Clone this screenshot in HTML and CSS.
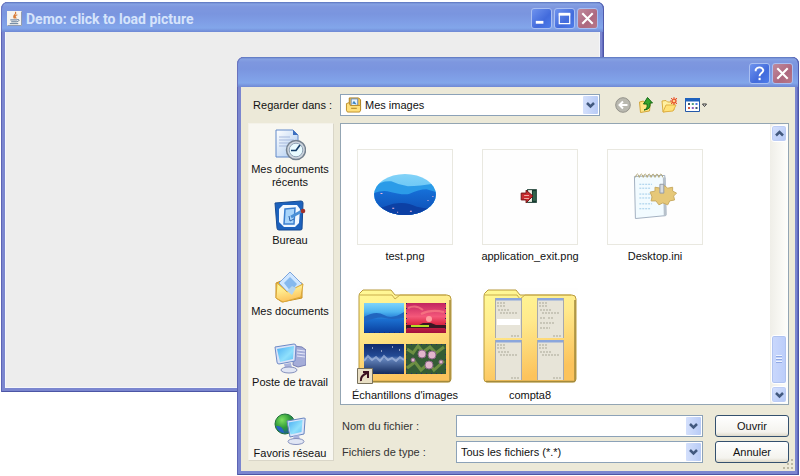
FILE: index.html
```html
<!DOCTYPE html>
<html lang="fr">
<head>
<meta charset="utf-8">
<title>Demo: click to load picture</title>
<link rel="stylesheet" href="styles.css">
</head>
<body>
<svg class="defs" aria-hidden="true">
  <defs>
    <linearGradient id="folder" x1="0" y1="0" x2=".3" y2="1"><stop offset="0" stop-color="#fffa96"/><stop offset=".45" stop-color="#ffe98c"/><stop offset="1" stop-color="#fcc35c"/></linearGradient>
    <linearGradient id="screen" x1="0" y1="0" x2="1" y2="1"><stop offset="0" stop-color="#4aaef2"/><stop offset=".6" stop-color="#8fe0fc"/><stop offset="1" stop-color="#5cc0f4"/></linearGradient>
    <linearGradient id="paper" x1="0" y1="0" x2="1" y2="1"><stop offset="0" stop-color="#fff"/><stop offset="1" stop-color="#a9c8ef"/></linearGradient>
    <linearGradient id="sky" x1="0" y1="0" x2="0" y2="1"><stop offset="0" stop-color="#7fd4fa"/><stop offset=".3" stop-color="#4db4f0"/><stop offset=".55" stop-color="#1b6fd0"/><stop offset="1" stop-color="#0a3f9e"/></linearGradient>
    <linearGradient id="sunset" x1="0" y1="0" x2="0" y2="1"><stop offset="0" stop-color="#c22460"/><stop offset=".45" stop-color="#f4587a"/><stop offset=".68" stop-color="#e02c48"/><stop offset="1" stop-color="#a0103c"/></linearGradient>
    <linearGradient id="night" x1="0" y1="0" x2="0" y2="1"><stop offset="0" stop-color="#102a6c"/><stop offset=".4" stop-color="#234a94"/><stop offset=".5" stop-color="#6484bc"/><stop offset="1" stop-color="#122a5c"/></linearGradient>
    <radialGradient id="globe" cx=".35" cy=".3" r=".8"><stop offset="0" stop-color="#7fe060"/><stop offset=".5" stop-color="#2f9a38"/><stop offset="1" stop-color="#174ea8"/></radialGradient>
    <symbol id="folder-big" viewBox="0 0 96 96">
      <path d="M2 91V8q0-3 2-4l2-2h28l4 5h52q4 0 4 4v80q0 3-3 3H5q-3 0-3-3z" fill="url(#folder)" stroke="#b99a3c"/>
      <path d="M3 7h32l3 4 5-4h46" fill="none" stroke="#c9ad4d"/>
      <path d="M93 12v81M4 93.500h89" stroke="#a38a3c" stroke-width="1.500"/>
    </symbol>
    <symbol id="sheet" viewBox="0 0 27 40">
      <path d="M0 0h27v40H0z" fill="#e7e4d8"/><path d="M0 0h27v2.500H0z" fill="#8ba6dc"/>
      <path d="M26.500 0v40M.5 0v40" stroke="#a7a9ae"/><path d="M2 5h9M2 8h8M3 12h12M5 15h18M16 38h9" stroke="#a9a797" stroke-dasharray="2 1"/>
    </symbol>
  </defs>
</svg>

<main class="desktop">
  <section class="window demo" aria-label="Demo">
    <header class="titlebar">
      <svg class="java" viewBox="0 0 16 16" aria-hidden="true"><path d="M0 0h16v16H0z" fill="#f5f4f0"/><path d="M.5 15.500h15V.5" fill="none" stroke="#8793a8"/><path d="M9 1c2 3-4 3-1 7M11 4c-3 1-3 2-1 4" fill="none" stroke="#d77a35" stroke-width="1.300"/><path d="M3.500 9.500h7.500M4.500 11.500h6M3 13.500h9M11 9c3 0 2 2-.5 2.500" fill="none" stroke="#557292"/></svg>
      <h1>Demo: click to load picture</h1>
      <div class="captions">
        <button class="cap" aria-label="Minimize"><svg viewBox="0 0 20 20"><path d="M4 14h8" stroke="#fff" stroke-width="3"/></svg></button>
        <button class="cap" aria-label="Maximize"><svg viewBox="0 0 20 20"><path d="M4.500 5h11v10.500h-11z" fill="none" stroke="#fff" stroke-width="1.300"/><path d="M4 5.500h12" stroke="#fff" stroke-width="3"/></svg></button>
        <button class="cap close" aria-label="Close"><svg viewBox="0 0 20 20"><path d="M4.500 4.500l11 11M15.500 4.500l-11 11" stroke="#fff" stroke-width="2.200"/></svg></button>
      </div>
    </header>
    <div class="canvas"></div>
  </section>

  <section class="window dialog" role="dialog" aria-label="Mes images">
    <header class="titlebar">
      <div class="captions">
        <button class="cap" aria-label="Aide"><svg viewBox="0 0 20 20"><path d="M6 7.500V6Q7 3.500 10 3.500t4 3q0 1.500-2 3T10 13" fill="none" stroke="#fff" stroke-width="2"/><path d="M9 14.500h2.200v2.500H9z" fill="#fff"/></svg></button>
        <button class="cap close" aria-label="Fermer"><svg viewBox="0 0 20 20"><path d="M4.500 4.500l11 11M15.500 4.500l-11 11" stroke="#fff" stroke-width="2.200"/></svg></button>
      </div>
    </header>
    <form class="content">
      <div class="lookin">
        <label for="dir">Regarder dans :</label>
        <div class="combo with-icon">
          <svg class="dir-icon" viewBox="0 0 17 17" aria-hidden="true"><path d="M4 1h10l2 2v11l-2 1H4z" fill="#f3c54e" stroke="#a97c1c"/><path d="M6 2h7v7H6z" fill="#e7f3fd" stroke="#6585b0"/><path d="M7 7l2-3 3 4z" fill="#3e87c4"/><path d="M1 7l3-1 1 3h11v5l-1 2H2l-1-2z" fill="#ffe07c" stroke="#bb8c26"/><path d="M6 12h6" stroke="#a97c1c"/></svg>
          <select id="dir"><option>Mes images</option></select>
          <svg class="arrow" viewBox="0 0 15 17" aria-hidden="true"><path d="M4 6.500l3.500 3.500L11 6.500" /></svg>
        </div>
        <div class="tools">
          <button type="button" aria-label="Retour"><svg viewBox="0 0 16 16"><circle cx="8" cy="8" r="7.300" fill="#b9b8af" stroke="#94938b"/><path d="M12.500 8H5M8 4.500L4.500 8 8 11.500" fill="none" stroke="#fff" stroke-width="2"/></svg></button>
          <button type="button" aria-label="Dossier parent"><svg viewBox="0 0 16 16"><path d="M1.500 5l4-1 1 1.500 6-1.500-1 10-9 1.500z" fill="#ffe583" stroke="#d2a63a"/><path d="M6 13q4-1 3-6H5.500L9.500.5l5 5.500H12q1 6.500-6 7z" fill="#35a42c" stroke="#146b16"/></svg></button>
          <button type="button" aria-label="Nouveau dossier"><svg viewBox="0 0 16 16"><path d="M1 4l4-.5L6.500 5H13v8l-11 2z" fill="#fff0a0" stroke="#d9ad40"/><path d="M2 15l3-7h10l-3 6z" fill="#ffe277" stroke="#e0b145"/><circle cx="13" cy="4" r="2" fill="#ffd08a" stroke="#e8542c" stroke-width="1.300"/><path d="M13 0v1M13 7v1M9 4h1M10 1l1 1M15 6l1 1M16 1l-1 1M11 6l-1 1" stroke="#e8542c"/></svg></button>
          <button type="button" class="views" aria-label="Affichage"><svg viewBox="0 0 24 16"><path d="M1.500 1.500h14v13h-14z" fill="#fff" stroke="#2458a8"/><path d="M1 1h15v3.500H1z" fill="#1f62bd"/><path d="M4 6h2v2H4zM11.500 10h2v2h-2z" fill="#405a70"/><path d="M7.800 6h2v2h-2z" fill="#50a080"/><path d="M11.500 6h2v2h-2z" fill="#4c7ae0"/><path d="M4 10h2v2H4z" fill="#d05a40"/><path d="M7.800 10h2v2h-2z" fill="#905ac0"/><path d="M18.500 7h4l-2 2.500z" fill="#fff" stroke="#333"/></svg></button>
        </div>
      </div>

      <div class="middle">
        <nav class="places" aria-label="Emplacements">
          <button type="button"><svg viewBox="0 0 32 32"><path d="M2 1h17l5 5v22H2z" fill="url(#paper)" stroke="#6188c8"/><path d="M19 1v5h5z" fill="#3c6fc0"/><path d="M5 8h11M5 11h15M5 14h10M5 17h9" stroke="#a7b9dd"/><circle cx="22" cy="21" r="9.500" fill="#cfd6df" stroke="#74818f" stroke-width="1.500"/><circle cx="22" cy="21" r="6.800" fill="#e9fbff" stroke="#8fa2b5"/><path d="M26 16l-4 5.500h-5" fill="none" stroke="#153d69" stroke-width="1.700"/></svg>Mes documents récents</button>
          <button type="button"><svg viewBox="0 0 32 32"><path d="M1 3l26-2q2 0 2 2l-1 26q0 1-2 1L5 30q-2 0-2-2z" fill="#1d62bd" stroke="#164b94"/><path d="M9 5h14l3 4-1 14-4 4H10l-5-5V9z" fill="#f2f8ff"/><path d="M11 9l10-1-1 16H10z" fill="#a8d4fb" stroke="#3b7fcf" stroke-width="1.500"/><path d="M15 16l1 5 4-2" fill="none" stroke="#2a62aa"/><path d="M17 17l11-6" stroke="#4a8fd6" stroke-width="3"/><circle cx="29" cy="11" r="2.300" fill="#a1302a"/></svg>Bureau</button>
          <button type="button"><svg viewBox="0 0 32 32"><path d="M2 12l5-2 6 4 15-2v15l-20 4-6-4z" fill="#f0b93a" stroke="#c88f22"/><path d="M5 12L16 1l12 12-11 12z" fill="#cfe6ff" stroke="#7ba4dc"/><path d="M10 12l6-6 7 7-6 8z" fill="#86b9ee"/><path d="M3 12l7 6 3 3 16-8-2 13-18 5-7-4z" fill="url(#folder)" stroke="#dba93b"/><path d="M13 20l5-5 4 2-4 7z" fill="#b6d5ec"/></svg>Mes documents</button>
          <button type="button"><svg viewBox="0 0 32 32"><path d="M20 4l8 1 4 3v15l-8 2-5-2z" fill="#a4acd8" stroke="#7880b4"/><path d="M23 8l8 1M23 11l8 1M23 14l8 1" stroke="#e6e8fa"/><path d="M1 5l19-3q2 0 2 2l-1 15-16 3q-2 0-2-2z" fill="#dbe3f7" stroke="#6e8ac7"/><path d="M3 7l17-3-1 13-13 3z" fill="url(#screen)"/><path d="M10 22l7-1 1 5h-7z" fill="#a9b3dc"/><ellipse cx="15" cy="28" rx="8" ry="3" fill="#e1e6f4" stroke="#8490bd"/></svg>Poste de travail</button>
          <button type="button"><svg viewBox="0 0 32 32"><circle cx="11" cy="11" r="10" fill="url(#globe)" stroke="#20703c"/><path d="M2 13q7-1 8 7-6-1-8-7z" fill="#2762c4"/><path d="M13 8l17-3q2 0 1 2l-1 14-14 3z" fill="#dbe5fa" stroke="#6985c0"/><path d="M14.500 9.500l14-2.500-1 12-11 2.500z" fill="url(#screen)"/><path d="M19 23l6-1 1 5h-6z" fill="#a9b3dc"/><ellipse cx="22" cy="28.500" rx="8" ry="3" fill="#e1e6f4" stroke="#8490bd"/></svg>Favoris réseau</button>
        </nav>

        <div class="files">
          <ul class="tiles">
            <li><div class="thumb"><svg viewBox="0 0 96 96"><clipPath id="oval"><ellipse cx="48" cy="45.500" rx="31.500" ry="21"/></clipPath><linearGradient id="haze" x1="0" y1="0" x2="0" y2="1"><stop offset="0" stop-color="#86d4f8"/><stop offset="1" stop-color="#3fb2f2"/></linearGradient><linearGradient id="ridge" x1="0" y1="0" x2="0" y2="1"><stop offset="0" stop-color="#1670d8"/><stop offset="1" stop-color="#0d49b0"/></linearGradient><g clip-path="url(#oval)"><path d="M16 22h64v46H16z" fill="url(#haze)"/><path d="M16 38q8-7 18-6 8 4 17 5 12 0 29-3v34H16z" fill="#2b9be8"/><path d="M16 44q8-3 14-2 14 4 22 3 10-5 18-5l10 3v26H16z" fill="url(#ridge)"/><path d="M16 60q10-1 20-5 13-3 24 3 12 3 20 1v12H16z" fill="#0c40a4"/></g><path d="M23 44h2v1h-2zM35 59h2v1h-2zM40 63h1v1h-1zM53 62h2v1h-2zM71 51h1v1h-1zM76 47h1v1h-1z" fill="#f4b6d8"/></svg></div><span>test.png</span></li>
            <li><div class="thumb"><svg viewBox="0 0 96 96"><path d="M45 40h10v14H45z" fill="#173b30"/><path d="M46 41h4v12h-4z" fill="#efefe5"/><path d="M51 42h3v10h-3z" fill="#32614a"/><path d="M39 44h5v-3l7 6-7 7v-3h-5z" fill="#c82c30" stroke="#741316"/><path d="M42 46h5v1h-5zM42 49h5v1h-5z" fill="#f0a6a0"/></svg></div><span>application_exit.png</span></li>
            <li><div class="thumb"><svg viewBox="0 0 96 96"><path d="M27 27l31-1 1 41-31 3z" fill="#f2fbff" stroke="#a2afbf"/><path d="M56 28h3l1 38-3 2z" fill="#b7c1cb"/><path d="M28 28q2-7 4 0 2-7 4 0 2-7 4 0 2-7 4 0 2-7 4 0 2-7 4 0 2-7 4 0" fill="none" stroke="#b3a878"/><path d="M32 35h13M32 39h12M32 45h14M32 49h14M32 55h13M32 60h12" stroke="#9fcbe8" stroke-dasharray="2 1"/><path d="M43 43l5-1 0-4 6 1 3-3 4 3 5-1 0 4 4 2-3 3 1 4-5 1-2 4-5-2-4 2-3-4-5 0 1-4z" fill="#e6c878" stroke="#c9ab62"/><path d="M53 35h4v9h-4z" fill="#d7dbe0" stroke="#929aa4"/></svg></div><span>Desktop.ini</span></li>
            <li><div class="thumb folder"><svg viewBox="0 0 96 96"><use href="#folder-big"/><path d="M7 15h40v30H7z" fill="url(#sky)"/><path d="M7 29q12-7 20-2t20-3v6q-12 2-19 0t-21 4z" fill="#2166c0"/><path d="M49 15h40v30H49z" fill="url(#sunset)"/><path d="M51 20q8-4 15 2M64 26q10-5 23-2" fill="none" stroke="#ff8a8a" stroke-width="2" opacity=".6"/><circle cx="72" cy="31" r="3" fill="#ff9da0"/><path d="M49 37h13l4-2h8l5 2h10v3H49z" fill="#391824"/><path d="M54 38h18" stroke="#b6dc24" stroke-width="2"/><path d="M7 56h40v30H7z" fill="url(#night)"/><path d="M7 73l4-5 4 4 4-3 4 4 4-5 4 4 4-2 4 3 4-4 4 3" fill="none" stroke="#a8bce0" stroke-width="2" opacity=".7"/><path d="M15 60h1M24 63h1M35 59h1M42 62h1" stroke="#fff"/><path d="M49 56h40v30H49z" fill="#355c34"/><path d="M50 61l6 4 5-7 5 6 7-5 6 6 8-6M50 80l8-6 6 8 8-7 5 7 10-9" fill="none" stroke="#6d8f42" stroke-width="3"/><g fill="#e2b6cb" stroke="#8b6888"><circle cx="65" cy="66" r="4"/><circle cx="75" cy="67" r="4"/><circle cx="72" cy="77" r="4"/><circle cx="56" cy="72" r="2"/><circle cx="84" cy="74" r="2"/></g><g fill="none" stroke="#222b6d" stroke-dasharray="1 4"><path d="M7 44.500h40M49.500 15v30M88.500 15v30M7 85.500h40M49 56.500h40M49 85.500h40M49.500 56v30M88.500 56v30"/></g><path d="M.5 80.500h15v15H.5z" fill="#e9dfc4" stroke="#77705b"/><path d="M4 93q-1-5 6-8M6 84h5v6" fill="none" stroke="#3c1020" stroke-width="2"/></svg></div><span>Échantillons d'images</span></li>
            <li><div class="thumb folder"><svg viewBox="0 0 96 96"><use href="#folder-big"/><use href="#sheet" x="13" y="10" width="27" height="40"/><use href="#sheet" x="55" y="10" width="27" height="40"/><use href="#sheet" x="13" y="52" width="27" height="40"/><use href="#sheet" x="55" y="52" width="27" height="40"/><path d="M15 31h23v6H15z" fill="#fff"/><path d="M58 30h5M66 30h5M58 35h15M58 40h10" stroke="#a9a797" stroke-dasharray="2 1"/></svg></div><span>compta8</span></li>
          </ul>
          <div class="scrollbar">
            <button type="button" aria-label="Haut"><svg viewBox="0 0 15 15"><path d="M4 9.500L7.500 6 11 9.500"/></svg></button>
            <div class="track"><div class="handle"></div></div>
            <button type="button" aria-label="Bas"><svg viewBox="0 0 15 15"><path d="M4 6l3.500 3.500L11 6"/></svg></button>
          </div>
        </div>

        <div class="fields">
          <label for="name">Nom du fichier :</label>
          <div class="combo"><input id="name" type="text"><svg class="arrow" viewBox="0 0 15 17" aria-hidden="true"><path d="M4 6.500l3.500 3.500L11 6.500"/></svg></div>
          <button type="button" class="action">Ouvrir</button>
          <label for="type">Fichiers de type :</label>
          <div class="combo"><select id="type"><option>Tous les fichiers (*.*)</option></select><svg class="arrow" viewBox="0 0 15 17" aria-hidden="true"><path d="M4 6.500l3.500 3.500L11 6.500"/></svg></div>
          <button type="button" class="action">Annuler</button>
        </div>
      </div>
      <svg class="grip" viewBox="0 0 12 12" aria-hidden="true"><path d="M9 1h2v2H9zM5 5h2v2H5zM9 5h2v2H9zM1 9h2v2H1zM5 9h2v2H5zM9 9h2v2H9z" fill="#bdb9a4"/></svg>
    </form>
  </section>
</main>
</body>
</html>
```
FILE: styles.css
```css
* { box-sizing: border-box; }

body {
  margin: 0;
  background: #fff;
  color: #111;
  font: 11px/13px "Liberation Sans", sans-serif;
}

button, input, select { font: inherit; color: inherit; margin: 0; }
button { padding: 0; border: 0; background: none; }
svg { display: block; flex: none; }
.defs { position: absolute; width: 0; height: 0; }

.desktop { position: relative; height: 100vh; overflow: hidden; }

.window {
  position: absolute;
  display: flex;
  flex-direction: column;
  padding: 0 4px 4px;
  border-radius: 7px 7px 0 0;
  background: #7b86cf;
  box-shadow: inset 1px 0 #5c64b4, inset -1px -1px #4c55a5, inset -2px 0 #636cc0;
}
.demo { inset: 2px 196px 84px 1px; }
.dialog { inset: 57px 1px 1px 237px; }

.titlebar {
  display: flex;
  align-items: center;
  height: 30px;
  flex: none;
  margin: 0 -4px;
  padding: 3px 6px 0;
  border-radius: 7px 7px 0 0;
  background: linear-gradient(#5a73bd 0, #86a2e3 2px, #7e97df 5px, #7a95df 12px, #7f9ee6 20px, #82a6ea 26px, #6f88d4 30px);
  box-shadow: inset 1px 0 #6972bd, inset -1px 0 #4f5aab;
}
.titlebar h1 {
  margin: 0 0 0 4px;
  color: #d6e4fb;
  font: bold 14px/16px Roboto, sans-serif;
}
.java { width: 15px; height: 15px; }
.captions { display: flex; gap: 2px; margin-left: auto; }
.cap {
  width: 21px;
  height: 21px;
  border: 1px solid #a9bff2;
  border-radius: 3px;
  background: linear-gradient(135deg, #6f93ee, #426bdc 60%, #4d7cea);
}
.cap svg { width: 19px; height: 19px; }
.cap.close { background: linear-gradient(135deg, #c08a9c, #ad6880 60%, #b87888); }

.canvas { flex: 1; background: #ededed; border: 1px solid #f4f6fb; border-top: 0; }

.content {
  position: relative;
  display: flex;
  flex-direction: column;
  flex: 1;
  min-height: 0;
  padding: 7px 6px 8px 7px;
  background: #ece9d8;
}

.lookin { display: flex; align-items: center; }
.lookin label { width: 84px; text-align: right; margin-right: 8px; }
.combo { position: relative; height: 22px; }
.with-icon { flex: 0 1 260px; }
.combo select, .combo input {
  appearance: none;
  display: block;
  width: 100%;
  height: 100%;
  padding: 0 20px 0 4px;
  border: 1px solid #8ca2b8;
  border-radius: 0;
  background: #fff;
}
.with-icon select { padding-left: 24px; }
.dir-icon { position: absolute; left: 5px; top: 3px; width: 17px; height: 16px; }
.arrow {
  position: absolute;
  right: 2px;
  top: 2px;
  width: 15px;
  height: 18px;
  border-radius: 1px;
  background: linear-gradient(90deg, #d4e0fc, #b8cbf6);
  pointer-events: none;
}
.arrow path, .scrollbar path { fill: none; stroke: #42597f; stroke-width: 2.5; }
.tools { display: flex; gap: 7px; margin-left: 15px; }
.tools svg { width: 16px; height: 16px; }
.tools .views svg { width: 24px; }

.middle {
  display: grid;
  grid-template-columns: 86px minmax(0, 1fr);
  grid-template-rows: minmax(0, 1fr) auto;
  column-gap: 6px;
  row-gap: 10px;
  flex: 1;
  min-height: 0;
  margin-top: 7px;
}

.places {
  grid-row: 1 / 3;
  display: flex;
  flex-direction: column;
  margin-bottom: 2px;
  padding: 5px 2px 0 0;
  border: 1px solid #f4f2e9;
  border-right-color: #d9d6c8;
  border-bottom-color: #d9d6c8;
  background: #f8f7f1;
}
.places button {
  display: flex;
  flex-direction: column;
  align-items: center;
  flex: 0 0 71px;
  gap: 2px;
}
.places button:last-child { flex-basis: 48px; }
.places svg { width: 32px; height: 32px; }

.files {
  display: flex;
  min-height: 0;
  border: 1px solid #93a5b3;
  background: #fff;
  overflow: hidden;
}
.tiles {
  display: grid;
  grid-template-columns: repeat(auto-fill, 124px);
  grid-auto-rows: 139px;
  column-gap: 1px;
  flex: 1;
  margin: 0;
  padding: 25px 0 0 2px;
  list-style: none;
}
.tiles li { display: flex; flex-direction: column; align-items: center; gap: 5px; }
.thumb { width: 96px; height: 96px; border: 1px solid #e9e8e0; background: #fefefe; }
.thumb svg { width: 94px; height: 94px; }
.thumb.folder { border: 0; }
.thumb.folder svg { width: 96px; height: 96px; }

.scrollbar {
  display: flex;
  flex-direction: column;
  width: 18px;
  padding: 1px;
  background: linear-gradient(90deg, #efeee8, #fefefb);
}
.scrollbar button {
  display: grid;
  place-items: center;
  height: 17px;
  border: 1px solid #fff;
  border-radius: 3px;
  background: linear-gradient(135deg, #d6e2fe, #b4c7f5);
  box-shadow: inset 0 0 0 1px #bdcdf5;
}
.scrollbar svg { width: 15px; height: 15px; }
.track { display: flex; flex: 1; align-items: flex-end; padding-bottom: 2px; }
.handle {
  display: grid;
  place-items: center;
  width: 16px;
  height: 49px;
  border: 1px solid #fff;
  border-radius: 3px;
  background: linear-gradient(90deg, #cad8fc, #bbcdfa);
  box-shadow: inset 0 0 0 1px #b0c3f0;
}
.handle::after {
  content: "";
  width: 6px;
  height: 9px;
  background: repeating-linear-gradient(#eef4fe 0 1px, #8fa8e4 1px 2px, #c4d3fb 2px 3px);
}

.fields {
  display: grid;
  grid-template-columns: 115px minmax(0, 1fr) 74px;
  column-gap: 1px;
  row-gap: 4px;
  align-items: center;
}
.fields label { padding-left: 2px; color: #333; }
.fields .combo { margin-right: 11px; }
.action {
  height: 22px;
  border: 1px solid #34506e;
  border-radius: 3px;
  background: linear-gradient(#fff, #f4f3ee 80%, #dedacb);
}
.grip { position: absolute; right: 1px; bottom: 1px; width: 12px; height: 12px; }
```
